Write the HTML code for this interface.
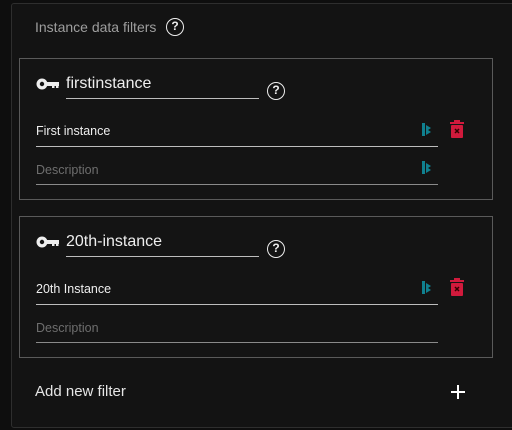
<!DOCTYPE html>
<html><head><style>
*{margin:0;padding:0;box-sizing:border-box}
body{width:512px;height:430px;background:#0e0e0e;font-family:"Liberation Sans",Roboto,sans-serif;position:relative;overflow:hidden}
.panel{position:absolute;left:11px;top:3px;width:520px;height:425px;background:#131313;border:1px solid #2e2e2e;border-radius:3px}
.a{position:absolute}
.card{position:absolute;left:19px;width:474px;height:142px;border:1px solid #5a5a5a;background:#141414}
.help{position:absolute;width:18px;height:18px;border:1.8px solid #eee;border-radius:50%;color:#eee;font-size:12px;font-weight:bold;text-align:center;line-height:15px}
.line{position:absolute;height:1px;background:#bdbdbd}
</style></head><body>
<div class="panel"></div>
<div class="a" style="left:35px;top:19px;font-size:14px;color:#9e9e9e">Instance data filters</div>
<div class="help" style="left:166px;top:18px">?</div>

<div class="card" style="top:58px"></div>
<div class="card" style="top:216px"></div>

<svg class="a" style="left:36px;top:77px" width="24" height="14" viewBox="0 0 24 14"><circle cx="6" cy="7" r="5.5" fill="#eee"/><circle cx="6" cy="7" r="2.2" fill="#141414"/><rect x="10" y="5" width="13" height="4" fill="#eee"/><rect x="16" y="8" width="2.5" height="3" fill="#eee"/><rect x="20" y="8" width="2.5" height="3" fill="#eee"/></svg>
<div class="a" style="left:66px;top:75px;font-size:16px;color:#eee">firstinstance</div>
<div class="line" style="left:66px;top:98px;width:193px"></div>
<div class="help" style="left:267px;top:82px">?</div>
<div class="a" style="left:36px;top:124px;font-size:12.5px;color:#eee">First instance</div>
<div class="line" style="left:36px;top:146px;width:402px"></div>
<div class="a" style="left:36px;top:163px;font-size:12.5px;color:#6e6e6e">Description</div>
<div class="line" style="left:36px;top:184px;width:402px;background:#8a8a8a"></div>
<svg class="a" style="left:421px;top:122px" width="12" height="15"><rect x="1" y="1" width="3" height="13" fill="#10808f"/><path d="M5 3 L10 6 L7 8 L10 10 L5 13Z" fill="#10808f"/></svg>
<svg class="a" style="left:421px;top:160px" width="12" height="15"><rect x="1" y="1" width="3" height="13" fill="#10808f"/><path d="M5 3 L10 6 L7 8 L10 10 L5 13Z" fill="#10808f"/></svg>
<svg class="a" style="left:450px;top:120px" width="14" height="18"><rect x="0" y="2" width="14" height="2" fill="#d11a3c"/><rect x="4" y="0" width="6" height="2" fill="#d11a3c"/><rect x="1" y="5" width="12" height="13" rx="1" fill="#d11a3c"/><path d="M5 9 L9 13 M9 9 L5 13" stroke="#300" stroke-width="1.5"/></svg>

<svg class="a" style="left:36px;top:235px" width="24" height="14" viewBox="0 0 24 14"><circle cx="6" cy="7" r="5.5" fill="#eee"/><circle cx="6" cy="7" r="2.2" fill="#141414"/><rect x="10" y="5" width="13" height="4" fill="#eee"/><rect x="16" y="8" width="2.5" height="3" fill="#eee"/><rect x="20" y="8" width="2.5" height="3" fill="#eee"/></svg>
<div class="a" style="left:66px;top:233px;font-size:16px;color:#eee">20th-instance</div>
<div class="line" style="left:66px;top:256px;width:193px"></div>
<div class="help" style="left:267px;top:240px">?</div>
<div class="a" style="left:36px;top:282px;font-size:12.5px;color:#eee">20th Instance</div>
<div class="line" style="left:36px;top:304px;width:402px"></div>
<div class="a" style="left:36px;top:321px;font-size:12.5px;color:#6e6e6e">Description</div>
<div class="line" style="left:36px;top:342px;width:402px;background:#8a8a8a"></div>
<svg class="a" style="left:421px;top:280px" width="12" height="15"><rect x="1" y="1" width="3" height="13" fill="#10808f"/><path d="M5 3 L10 6 L7 8 L10 10 L5 13Z" fill="#10808f"/></svg>
<svg class="a" style="left:450px;top:278px" width="14" height="18"><rect x="0" y="2" width="14" height="2" fill="#d11a3c"/><rect x="4" y="0" width="6" height="2" fill="#d11a3c"/><rect x="1" y="5" width="12" height="13" rx="1" fill="#d11a3c"/><path d="M5 9 L9 13 M9 9 L5 13" stroke="#300" stroke-width="1.5"/></svg>

<div class="a" style="left:35px;top:383px;font-size:15px;color:#e6e6e6">Add new filter</div>
<svg class="a" style="left:451px;top:385px" width="14" height="14"><path d="M7 0V14M0 7H14" stroke="#fff" stroke-width="2"/></svg>
</body></html>
